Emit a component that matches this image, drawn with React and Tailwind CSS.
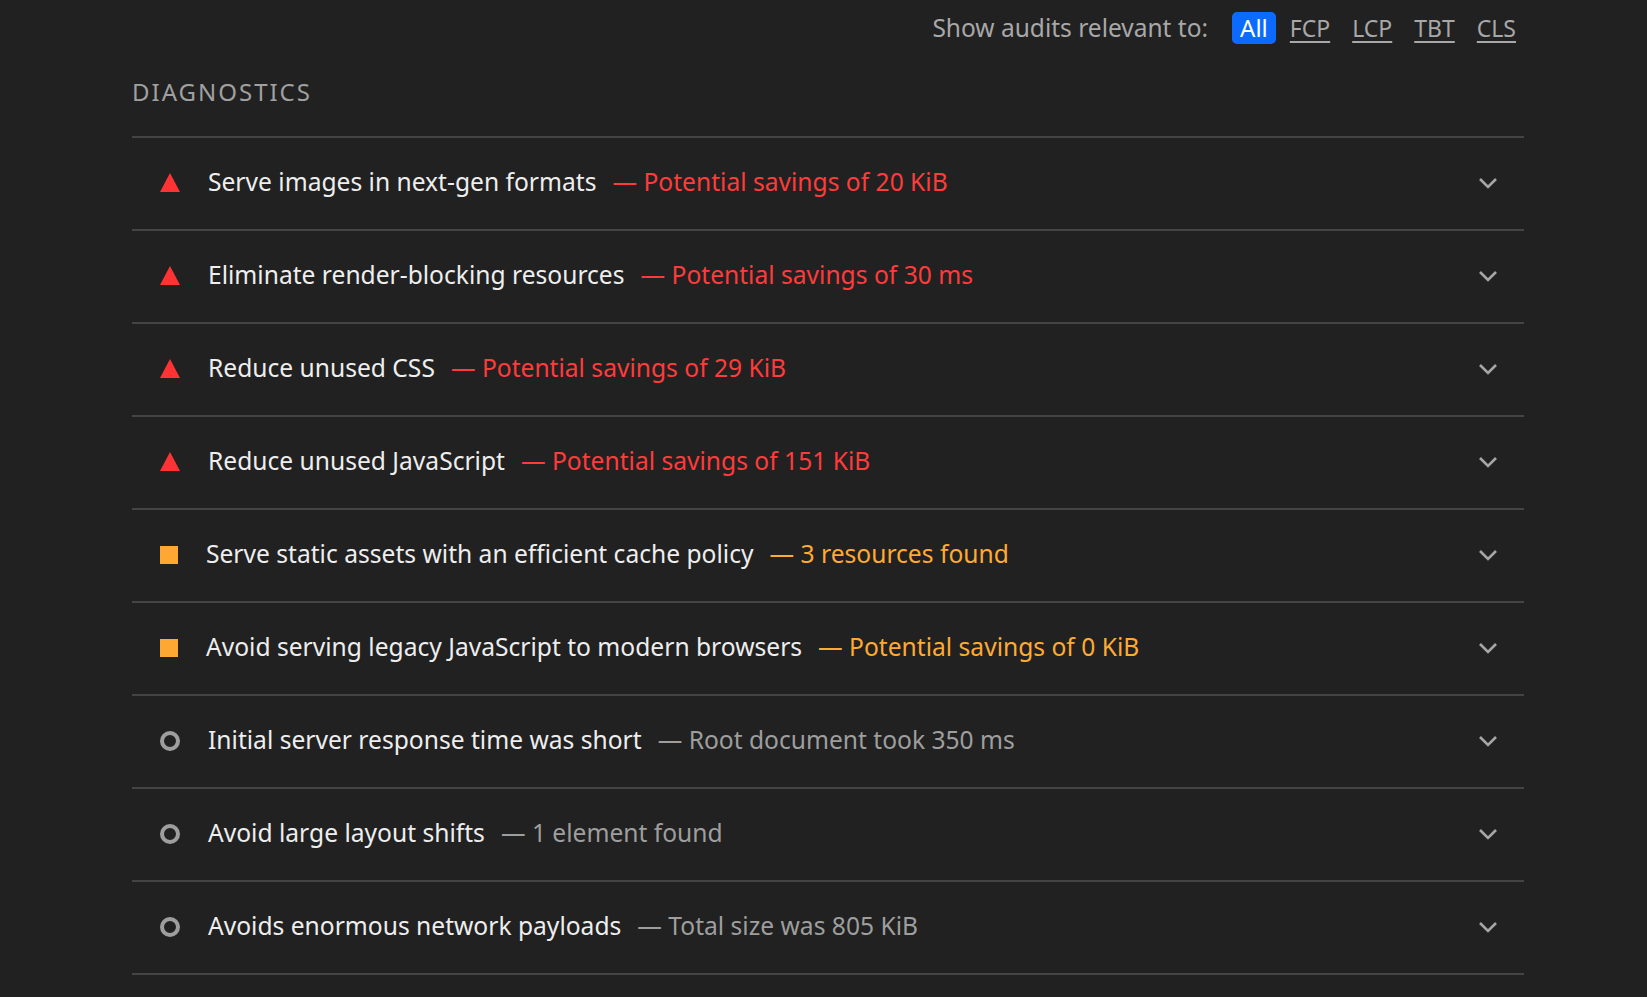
import React from 'react';

const audits = [
    { title: 'Serve images in next-gen formats', desc: 'Potential savings of 20 KiB', level: 'fail' },
    { title: 'Eliminate render-blocking resources', desc: 'Potential savings of 30 ms', level: 'fail' },
    { title: 'Reduce unused CSS', desc: 'Potential savings of 29 KiB', level: 'fail' },
    { title: 'Reduce unused JavaScript', desc: 'Potential savings of 151 KiB', level: 'fail' },
    { title: 'Serve static assets with an efficient cache policy', desc: '3 resources found', level: 'average' },
    { title: 'Avoid serving legacy JavaScript to modern browsers', desc: 'Potential savings of 0 KiB', level: 'average' },
    { title: 'Initial server response time was short', desc: 'Root document took 350 ms', level: 'info' },
    { title: 'Avoid large layout shifts', desc: '1 element found', level: 'info' },
    { title: 'Avoids enormous network payloads', desc: 'Total size was 805 KiB', level: 'info' },
];

const descColor = {
    fail: 'text-[#ff3b3b]',
    average: 'text-[#ffaa33]',
    info: 'text-[#9e9e9e]',
};

const Icon = ({ level }) => {
    if (level === 'fail') {
        return (
            <div className='w-[20px] flex justify-center mr-[28px]'>
                <div className='w-0 h-0 border-l-[10px] border-r-[10px] border-b-[19px] border-l-transparent border-r-transparent border-b-[#ff3333]' />
            </div>
        );
    }
    if (level === 'average') {
        return (
            <div className='w-[20px] flex mr-[26px]'>
                <div className='w-[18px] h-[18px] bg-[#ffa733]' />
            </div>
        );
    }
    return (
        <div className='w-[20px] flex mr-[28px]'>
            <div className='w-[20px] h-[20px] rounded-full border-[4px] border-[#9e9e9e]' />
        </div>
    );
};

const Chevron = () => (
    <svg width='20' height='12' viewBox='0 0 20 12' fill='none'>
        <path d='M2 2 L10 10 L18 2' stroke='#a6a6a6' strokeWidth='2.6' />
    </svg>
);

const filters = ['FCP', 'LCP', 'TBT', 'CLS'];

const App = () => {
    return (
        <div className="min-h-[997px] w-full bg-[#212121] font-['Noto_Sans',sans-serif]">
            <div className='ml-[132px] w-[1392px]'>
                {/* filter bar */}
                <div className='h-[56px] flex items-center justify-end'>
                    <span className='text-[24.5px] text-[#a8a8a8] mr-[24px]'>Show audits relevant to:</span>
                    <div className='flex items-center gap-[6px]'>
                        <span className='h-[32px] px-2 flex items-center rounded-[5px] bg-[#0b6bff] text-white text-[24px]'>All</span>
                        {filters.map((f) => (
                            <span key={f} className='h-[32px] px-2 flex items-center text-[23px] text-[#a8a8a8] underline underline-offset-[4px]'>
                                {f}
                            </span>
                        ))}
                    </div>
                </div>

                <div className='h-[80px] pb-[8px] flex items-center'>
                    <h2 className='text-[24px] tracking-[2px] text-[#a0a0a0]'>DIAGNOSTICS</h2>
                </div>

                <div className='border-t-2 border-[#444444]'>
                    {audits.map((a, i) => (
                        <div key={i} className='h-[93px] pb-[2px] border-b-2 border-[#444444] flex items-center pl-[28px] pr-[26px]'>
                            <Icon level={a.level} />
                            <span className='text-[24.6px] text-[#eeeeee]'>{a.title}</span>
                            <span className={`text-[24.6px] ml-[16px] ${descColor[a.level]}`}>— {a.desc}</span>
                            <div className='ml-auto flex items-center'>
                                <Chevron />
                            </div>
                        </div>
                    ))}
                </div>
            </div>
        </div>
    );
};

export default App;
